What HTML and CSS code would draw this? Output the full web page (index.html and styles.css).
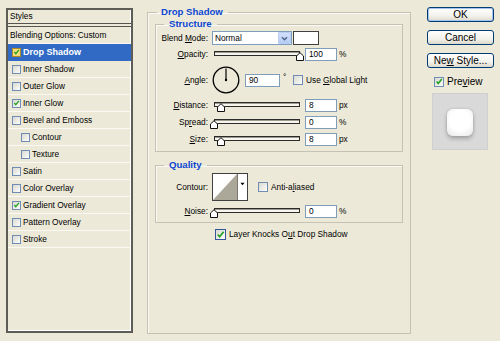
FILE: index.html
```html
<!DOCTYPE html>
<html>
<head>
<meta charset="utf-8">
<title>Layer Style</title>
<link rel="stylesheet" href="styles.css">
</head>
<body>
<div class="dialog">
  <div class="styles-panel">
    <div class="sp-head">Styles</div>
    <div class="sp-row plain">Blending Options: Custom</div>
    <div class="sp-row sel"><span class="cb hot"><svg viewBox="0 0 10 10"><path d="M2 5l2 2.5L8.5 2" /></svg></span>Drop Shadow</div>
    <div class="sp-row"><span class="cb"></span>Inner Shadow</div>
    <div class="sp-row"><span class="cb"></span>Outer Glow</div>
    <div class="sp-row"><span class="cb"><svg viewBox="0 0 10 10"><path d="M2 5l2 2.5L8.5 2" /></svg></span>Inner Glow</div>
    <div class="sp-row"><span class="cb"></span>Bevel and Emboss</div>
    <div class="sp-row sub"><span class="cb"></span>Contour</div>
    <div class="sp-row sub"><span class="cb"></span>Texture</div>
    <div class="sp-row"><span class="cb"></span>Satin</div>
    <div class="sp-row"><span class="cb"></span>Color Overlay</div>
    <div class="sp-row"><span class="cb"><svg viewBox="0 0 10 10"><path d="M2 5l2 2.5L8.5 2" /></svg></span>Gradient Overlay</div>
    <div class="sp-row"><span class="cb"></span>Pattern Overlay</div>
    <div class="sp-row"><span class="cb"></span>Stroke</div>
  </div>

  <fieldset class="group outer">
    <legend>Drop Shadow</legend>

    <fieldset class="group inner structure">
      <legend>Structure</legend>
      <div class="row r-blend">
        <span class="lbl">Blend <u>M</u>ode:</span>
        <div class="select"><span class="sel-text">Normal</span><span class="sel-btn"><svg viewBox="0 0 8 6"><path d="M1 1.5l3 3 3-3"/></svg></span></div>
        <span class="color-swatch"></span>
      </div>
      <div class="row r-opacity">
        <span class="lbl"><u>O</u>pacity:</span>
        <div class="slider"><div class="track"></div><svg class="thumb" style="left:82px" viewBox="0 0 8 9"><path d="M0.5 8.5V4L4 0.7 7.5 4v4.5z"/></svg></div>
        <span class="num">100</span><span class="unit">%</span>
      </div>
      <div class="row r-angle">
        <span class="lbl"><u>A</u>ngle:</span>
        <svg class="dial" viewBox="0 0 28 28"><circle cx="14" cy="14" r="12.8"/><path d="M14 14V2.5"/><circle class="dot" cx="14" cy="14" r="1.2"/></svg>
        <span class="num wide">90</span><span class="deg">°</span>
        <span class="cb big"></span><span>Use <u>G</u>lobal Light</span>
      </div>
      <div class="row r-dist">
        <span class="lbl"><u>D</u>istance:</span>
        <div class="slider"><div class="track"></div><svg class="thumb" style="left:3px" viewBox="0 0 8 9"><path d="M0.5 8.5V4L4 0.7 7.5 4v4.5z"/></svg></div>
        <span class="num">8</span><span class="unit">px</span>
      </div>
      <div class="row r-spread">
        <span class="lbl">Sp<u>r</u>ead:</span>
        <div class="slider"><div class="track"></div><svg class="thumb" style="left:-4px" viewBox="0 0 8 9"><path d="M0.5 8.5V4L4 0.7 7.5 4v4.5z"/></svg></div>
        <span class="num">0</span><span class="unit">%</span>
      </div>
      <div class="row r-size">
        <span class="lbl"><u>S</u>ize:</span>
        <div class="slider"><div class="track"></div><svg class="thumb" style="left:3px" viewBox="0 0 8 9"><path d="M0.5 8.5V4L4 0.7 7.5 4v4.5z"/></svg></div>
        <span class="num">8</span><span class="unit">px</span>
      </div>
    </fieldset>

    <fieldset class="group inner quality">
      <legend>Quality</legend>
      <div class="row r-contour">
        <span class="lbl">Contour:</span>
        <div class="contour">
          <svg class="c-graph" viewBox="0 0 24 26" preserveAspectRatio="none"><path d="M0 26L24 0V26z"/></svg>
          <span class="c-drop"><svg viewBox="0 0 6 4"><path d="M0.5 0.5h5L3 3.5z"/></svg></span>
        </div>
        <span class="cb big aa"></span><span>Anti-a<u>l</u>iased</span>
      </div>
      <div class="row r-noise">
        <span class="lbl"><u>N</u>oise:</span>
        <div class="slider"><div class="track"></div><svg class="thumb" style="left:-4px" viewBox="0 0 8 9"><path d="M0.5 8.5V4L4 0.7 7.5 4v4.5z"/></svg></div>
        <span class="num">0</span><span class="unit">%</span>
      </div>
    </fieldset>

    <div class="row r-knock">
      <span class="cb big focus"><svg viewBox="0 0 10 10"><path d="M2 5l2 2.5L8.5 2" /></svg></span><span>Layer Knocks O<u>u</u>t Drop Shadow</span>
    </div>
  </fieldset>

  <div class="side">
    <div class="btn default">OK</div>
    <div class="btn">Cancel</div>
    <div class="btn">Ne<u>w</u> Style...</div>
    <div class="preview-check"><span class="cb big"><svg viewBox="0 0 10 10"><path d="M2 5l2 2.5L8.5 2" /></svg></span>Pre<u>v</u>iew</div>
    <div class="preview"><div class="pv-shape"></div></div>
  </div>
</div>
</body>
</html>
```

FILE: styles.css
```css
* { box-sizing: border-box; }
html, body { margin: 0; padding: 0; }
body {
  width: 500px;
  height: 341px;
  overflow: hidden;
  background: #ece9d8;
  font-family: "Liberation Sans", Arial, sans-serif;
  font-size: 8.3px;
  color: #000;
}
u { text-decoration: underline; text-underline-offset: 1px; }

.dialog {
  display: flex;
  align-items: flex-start;
  height: 341px;
  padding: 6px 0 0 6px;
}

/* ---------- left styles list ---------- */
.styles-panel {
  width: 127px;
  height: 325px;
  margin-top: 2px;
  border: 2px solid #5d5c57;
  box-shadow: inset -1px -1px 0 #fff;
  display: flex;
  flex-direction: column;
  flex: none;
}
.sp-head {
  height: 17px;
  line-height: 12px;
  padding-left: 2px;
  border-bottom: 4px double #55544f;
}
.sp-row {
  height: 17px;
  display: flex;
  align-items: center;
  padding-left: 4px;
  border-bottom: 1px solid #faf9f3;
  white-space: nowrap;
}
.sp-row.plain { padding-left: 2px; }
.sp-row.sub { padding-left: 13px; }
.sp-row.sel {
  background: #316ac5;
  border-bottom-color: #316ac5;
  color: #fff;
  font-weight: bold;
  font-size: 9px;
}

/* ---------- checkboxes ---------- */
.cb {
  flex: none;
  width: 9px;
  height: 9px;
  margin-right: 2px;
  border: 1px solid #6f8db4;
  background: linear-gradient(135deg, #d9d8d0, #fdfdfb);
  display: inline-flex;
  align-items: center;
  justify-content: center;
}
.cb svg { width: 8px; height: 8px; }
.cb path { fill: none; stroke: #21a121; stroke-width: 1.9; }
.cb.hot { background: #f4dc7c; border-color: #b08a22; }
.cb.big { width: 10px; height: 10px; margin-right: 3px; }
.cb.big svg { width: 9px; height: 9px; }
.cb.focus { width: 11px; height: 11px; border-color: #33579a; }

/* ---------- group boxes ---------- */
fieldset.group {
  margin: 0;
  padding: 0;
  min-width: 0;
  border: 1px solid #c5c2b1;
  box-shadow: inset 1px 1px 0 #fbfaf6;
}
fieldset.group > legend {
  color: #0b46d0;
  font-weight: bold;
  font-size: 9.6px;
  line-height: 12px;
}
.outer {
  flex: none;
  width: 264px;
  height: 328px;
  margin-left: 14px !important;
  padding: 0 7px !important;
}
.outer > legend { margin-left: 2px; padding: 0 5px 0 4px; }
.inner > legend { margin-left: 8px; padding: 0 5px; }
.structure { padding-bottom: 5px !important; }
.quality { margin-top: 7px !important; padding-bottom: 4px !important; }

/* ---------- rows ---------- */
.row {
  display: flex;
  align-items: center;
  white-space: nowrap;
  height: 14px;
}
.lbl { flex: none; width: 52px; text-align: right; }
.r-blend { margin-top: 1px; }
.r-opacity { margin-top: 2px; }
.r-angle { margin-top: 5px; height: 28px; }
.r-dist { margin-top: 4px; }
.r-spread, .r-size { margin-top: 3px; }
.r-contour { margin-top: 2px; height: 28px; }
.r-noise { margin-top: 3px; }
.r-knock { margin-top: 5px; height: 12px; padding-left: 60px; }

/* select */
.select {
  flex: none;
  margin-left: 4px;
  width: 80px;
  height: 14px;
  border: 1px solid #7f9db9;
  background: #fff;
  display: flex;
  align-items: center;
}
.sel-text { flex: 1; padding-left: 2px; }
.sel-btn {
  width: 13px;
  height: 12px;
  border-radius: 1px;
  background: linear-gradient(#d3e0fb, #b6cbf5);
  border: 1px solid #b9cdf4;
  display: flex;
  align-items: center;
  justify-content: center;
}
.sel-btn svg { width: 7px; height: 5px; }
.sel-btn path { fill: none; stroke: #4d6185; stroke-width: 1.6; }
.color-swatch {
  flex: none;
  margin-left: 1px;
  width: 26px;
  height: 14px;
  border: 1px solid #404040;
  background: #fff;
}

/* slider */
.slider {
  position: relative;
  flex: none;
  margin-left: 6px;
  width: 86px;
  height: 14px;
}
.track {
  margin-top: 4px;
  height: 5px;
  border: 1px solid #2b2b2b;
  background: #f8f6ec;
  box-shadow: inset 0 1px 0 #9c9a8e;
}
.thumb {
  position: absolute;
  top: 5px;
  width: 8px;
  height: 9px;
}
.thumb path { fill: #fff; stroke: #111; stroke-width: 1; }

.num {
  flex: none;
  margin-left: 5px;
  width: 32px;
  height: 13px;
  line-height: 11px;
  padding-left: 3px;
  border: 1px solid #7f9db9;
  background: #fff;
}
.num.wide { width: 35px; }
.unit { margin-left: 2px; }
.deg { flex: none; width: 13px; padding-left: 3px; align-self: flex-start; margin-top: 6px; }

.dial { flex: none; margin-left: 4px; width: 28px; height: 28px; }
.dial circle { fill: none; stroke: #000; stroke-width: 1.3; }
.dial path { stroke: #000; stroke-width: 1.2; }
.dial .dot { fill: #000; stroke: none; }

/* contour */
.contour {
  flex: none;
  margin-left: 4px;
  width: 36px;
  height: 28px;
  border: 1px solid #404040;
  background: #fff;
  display: flex;
}
.c-graph { width: 24px; height: 26px; }
.c-graph path { fill: #aca899; }
.c-drop {
  flex: 1;
  border-left: 1px solid #7a786e;
  display: flex;
  justify-content: center;
  padding-top: 8px;
}
.c-drop svg { width: 5px; height: 4px; }
.c-drop path { fill: #000; }
.cb.aa { margin-left: 10px; }

/* ---------- right column ---------- */
.side {
  flex: none;
  margin-left: 16px;
  width: 67px;
  display: flex;
  flex-direction: column;
}
.btn {
  height: 15px;
  border: 1px solid #003c74;
  border-radius: 3px;
  background: linear-gradient(#ffffff, #f3f2ec 60%, #dcd8cc);
  font-size: 10px;
  line-height: 13px;
  text-align: center;
  white-space: nowrap;
}
.btn + .btn { margin-top: 8px; }
.btn.default { margin-top: 1px; box-shadow: inset 0 0 0 1px #a8c2ee; }
.preview-check {
  margin-top: 8px;
  padding-left: 7px;
  height: 11px;
  display: flex;
  align-items: center;
  font-size: 10px;
}
.preview {
  margin-top: 6px;
  margin-left: 5px;
  width: 56px;
  height: 57px;
  background: #d9d9d9;
  border: 1px solid #cfcfcf;
  padding-top: 15px;
}
.pv-shape {
  margin: 0 auto;
  width: 26px;
  height: 27px;
  border-radius: 6px;
  background: radial-gradient(circle at 50% 42%, #ffffff 50%, #e6e6e6 100%);
  box-shadow: 0 3px 4px rgba(0, 0, 0, 0.22), 0 0 3px rgba(0, 0, 0, 0.14);
}
```
